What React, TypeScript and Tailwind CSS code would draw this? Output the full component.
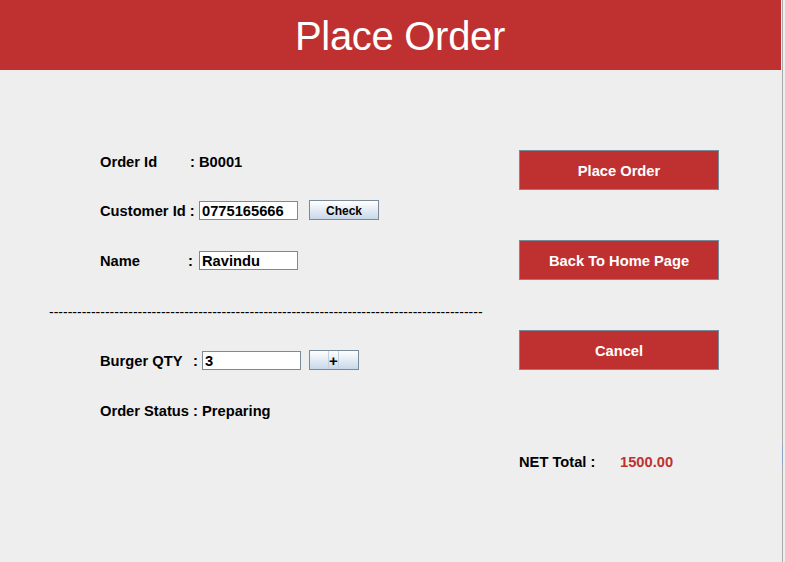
import React from "react"

const font = { fontFamily: '"Liberation Sans", Arial, sans-serif' }

function TextBox({ value, width }: { value: string; width: string }) {
  return (
    <div
      className={`${width} h-[19px] bg-white border border-[#7a8a99] flex items-center pl-[2px] pt-[2px] text-[14.7px] font-bold text-black leading-none`}
    >
      {value}
    </div>
  )
}

function RedButton({ label }: { label: string }) {
  return (
    <button className="w-[200px] h-[40px] bg-[#bf3131] border border-[#7a8a99] text-white text-[14.7px] font-bold flex items-center justify-center pt-[2px]">
      {label}
    </button>
  )
}

export default function App() {
  const dashes = "-".repeat(93)

  return (
    <div className="w-[785px] h-[562px] flex bg-[#eeeeee] overflow-hidden text-black" style={font}>
      <div className="w-[781px] flex flex-col">
        {/* Header */}
        <div className="h-[70px] bg-[#bf3131] flex items-center justify-center pl-[19px] pt-[2px]">
          <h1 className="text-white text-[40px] leading-none tracking-[-0.3px]">Place Order</h1>
        </div>

        <div className="flex">
          {/* Left form */}
          <div className="ml-[50px] w-[434px] flex flex-col text-[14.7px] font-bold">
            <div className="mt-[81px] h-[20px] pl-[50px] flex items-center pt-[2px]">
              <span className="w-[90px]">Order Id</span>
              <span>: B0001</span>
            </div>

            <div className="mt-[29px] h-[20px] pl-[50px] flex items-center">
              <span className="w-[99px] pt-[2px]">Customer Id :</span>
              <TextBox value="0775165666" width="w-[99px]" />
              <button className="ml-[11px] w-[70px] h-[20px] border border-[#7a8a99] bg-gradient-to-b from-white to-[#c8d8ea] text-[12px] font-bold flex items-center justify-center pt-[1px]">
                Check
              </button>
            </div>

            <div className="mt-[30px] h-[20px] pl-[50px] flex items-center">
              <span className="w-[88px] pt-[2px]">Name</span>
              <span className="w-[11px] pt-[2px]">:</span>
              <TextBox value="Ravindu" width="w-[99px]" />
            </div>

            <div className="mt-[35px] h-[14px] text-[14px] leading-[14px] font-normal whitespace-nowrap w-[436px] -ml-[1px]">
              {dashes}
            </div>

            <div className="mt-[31px] h-[20px] pl-[50px] flex items-center">
              <span className="w-[93px] pt-[2px]">Burger QTY</span>
              <span className="w-[9px] pt-[2px]">:</span>
              <TextBox value="3" width="w-[99px]" />
              <button className="ml-[8px] w-[50px] h-[20px] border border-[#7a8a99] bg-gradient-to-b from-white to-[#c8d8ea] flex items-stretch">
                <span className="w-[19px] border-r border-[#c4d0dc]" />
                <span className="w-[10px] border-r border-[#c4d0dc] flex items-center justify-center text-[15px] font-bold leading-none">
                  +
                </span>
                <span className="flex-1" />
              </button>
            </div>

            <div className="mt-[30px] h-[20px] pl-[50px] flex items-center pt-[2px]">Order Status : Preparing</div>
          </div>

          {/* Right actions */}
          <div className="ml-[35px] w-[200px] flex flex-col">
            <div className="mt-[80px]">
              <RedButton label="Place Order" />
            </div>
            <div className="mt-[50px]">
              <RedButton label="Back To Home Page" />
            </div>
            <div className="mt-[50px]">
              <RedButton label="Cancel" />
            </div>
            <div className="mt-[81px] h-[20px] flex items-center text-[14.7px] font-bold pt-[2px]">
              <span className="w-[101px]">NET Total :</span>
              <span className="text-[#bf3131]">1500.00</span>
            </div>
          </div>
        </div>
      </div>

      {/* window edge */}
      <div className="w-[1px] ml-[1px] bg-[#a9a9a9] flex flex-col">
        <div className="mt-[445px] h-[20px] bg-[#8ea4c4]" />
      </div>
    </div>
  )
}
